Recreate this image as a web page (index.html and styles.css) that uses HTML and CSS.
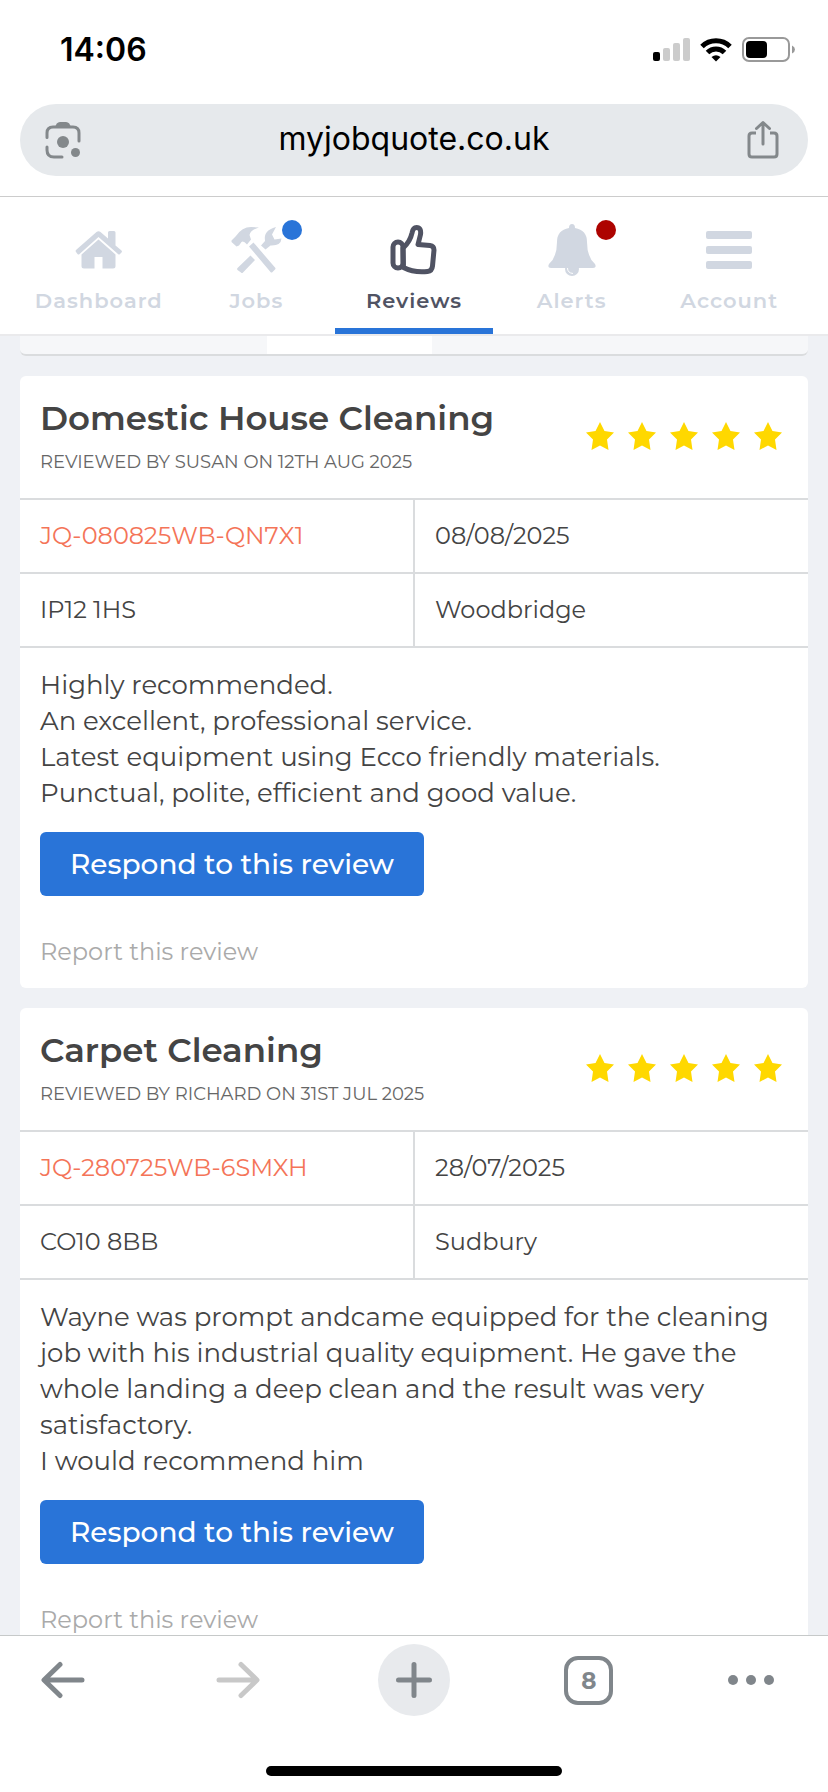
FILE: index.html
```html
<!DOCTYPE html>
<html lang="en">
<head>
    <meta charset="UTF-8">
    <meta name="viewport" content="width=device-width, initial-scale=1.0">
    <title>Reviews</title>
    <link rel="stylesheet" href="styles.css">
</head>
<body>
    <div class="status-bar">
        <span class="clock">14:06</span>
        <div class="status-icons">
            <svg width="37" height="24" viewBox="0 0 37 24">
                <rect x="0" y="14" width="7" height="9" rx="2" fill="#000"/>
                <rect x="10" y="10" width="7" height="13" rx="2" fill="#ccc"/>
                <rect x="20" y="5" width="7" height="18" rx="2" fill="#ccc"/>
                <rect x="30" y="0" width="7" height="23" rx="2" fill="#ccc"/>
            </svg>
            <svg width="32" height="24" viewBox="0 0 32 24" fill="none" stroke="#000" stroke-width="5">
                <path d="M2 8.500a20 20 0 0 1 28 0"/>
                <path d="M7.500 14.500a12 12 0 0 1 17 0"/>
                <path d="M16 23.500l-4.500-4.500q4.500-3.500 9 0z" fill="#000" stroke="none"/>
            </svg>
            <svg width="54" height="26" viewBox="0 0 54 26">
                <rect x="1" y="1" width="46" height="23" rx="6" fill="none" stroke="#999" stroke-width="2"/>
                <rect x="4" y="4" width="21" height="17" rx="4" fill="#000"/>
                <path d="M50 8.500v8q3-1.500 3-4t-3-4z" fill="#999"/>
            </svg>
        </div>
    </div>

    <div class="address-bar">
        <button class="icon-button" aria-label="Search with camera">
            <svg width="38" height="38" viewBox="0 0 38 38" fill="none" stroke="#83888b" stroke-width="3" stroke-linecap="round">
                <path d="M3 16.500V12q0-6 6-6h20q6 0 6 6v8"/>
                <path d="M3 26v3q0 7 7 7h8"/>
                <path d="M11 7q1-6 5-6h6q4 0 5 6z" fill="#83888b" stroke="none"/>
                <circle cx="19" cy="21" r="6" fill="#83888b" stroke="none"/>
                <circle cx="31.500" cy="31.500" r="4.500" fill="#83888b" stroke="none"/>
            </svg>
        </button>
        <input class="address-input" type="text" value="myjobquote.co.uk" aria-label="Address">
        <button class="icon-button" aria-label="Share">
            <svg width="34" height="40" viewBox="0 0 34 40" fill="none" stroke="#83888b" stroke-width="3" stroke-linecap="round" stroke-linejoin="round">
                <path d="M10 13H6q-3 0-3 3v18q0 3 3 3h22q3 0 3-3V16q0-3-3-3h-4" stroke-linecap="butt"/>
                <path d="M17 24V3M10.500 8.500L17 2.500l6.500 6"/>
            </svg>
        </button>
    </div>

    <nav class="main-nav">
        <a class="nav-item" href="#">
            <span class="nav-icon">
                <svg width="48" height="52" viewBox="0 0 48 52">
                    <path d="M1 26L21.500 8q2-1.500 4 0L33 14.500V8.500q0-1.500 1.500-1.500h4.500q1.500 0 1.500 1.500v13l6 5q1 1 0 2l-1.500 1.500q-1 1-2 0L23.500 13L4.500 30q-1 1-2 0L1 28q-1-1 0-2z"/>
                    <path d="M6.500 30.500L23.500 15.500L40.500 30.500v11.500q0 2.500-2.500 2.500H27.500V33h-8v11.500H9Q6.500 44.500 6.500 42z"/>
                </svg>
            </span>
            <span class="nav-label">Dashboard</span>
        </a>
        <a class="nav-item" href="#">
            <span class="nav-icon">
                <svg width="52" height="52" viewBox="0 0 52 52">
                    <path d="M1.500 16.500L6 12Q12 3 21 3L29 3.500Q20.500 6 19.500 11L21 15.500L17 20.500Q13.500 16.500 11.500 18L9 21.500L6.500 22.500L1.500 18z"/>
                    <path d="M19 22.500L23.500 18.500L45 43.500q1 1 0 2l-2.500 2.500q-1 1-2 0z"/>
                    <path d="M20.500 31.500L25 36L13 48.500q-1 1-2 0L7.500 46q-1-1 0-2z"/>
                    <path d="M31 21.500L35 17Q33 6.500 46 3L42 10.500L44.500 15.500L51.500 14.500Q51 22 40.500 21.500L35.500 25.500z"/>
                </svg>
                <span class="badge badge-blue"></span>
            </span>
            <span class="nav-label">Jobs</span>
        </a>
        <a class="nav-item active" href="#" aria-current="page">
            <span class="nav-icon">
                <svg class="outline" width="48" height="52" viewBox="0 0 48 52">
                    <rect x="3" y="18" width="10" height="26" rx="5"/>
                    <path d="M13 24Q20 18 22 9q1-5.500 4.500-5.500 5 0 4 7L28 20.500l12 1q4 .5 4 4.500l-1.500 16q-.5 5-5 5.500Q24 49 13.500 43.500z"/>
                </svg>
            </span>
            <span class="nav-label">Reviews</span>
        </a>
        <a class="nav-item" href="#">
            <span class="nav-icon">
                <svg width="48" height="52" viewBox="0 0 48 52">
                    <path d="M24 0q3 0 3 4 12 2 12 14 0 15 8 22 2 4-2 4H3q-4 0-2-4 8-7 8-22Q9 6 21 4q0-4 3-4z"/>
                    <circle cx="24" cy="45" r="7"/>
                    <path d="M19.500 44q0 5 5.500 5.500" fill="none" stroke="#fff"/>
                </svg>
                <span class="badge badge-red"></span>
            </span>
            <span class="nav-label">Alerts</span>
        </a>
        <a class="nav-item" href="#">
            <span class="nav-icon">
                <svg width="46" height="52" viewBox="0 0 46 52">
                    <rect x="0" y="7" width="46" height="8" rx="2"/>
                    <rect x="0" y="22" width="46" height="8" rx="2"/>
                    <rect x="0" y="37" width="46" height="8" rx="2"/>
                </svg>
            </span>
            <span class="nav-label">Account</span>
        </a>
    </nav>

    <main class="content">
        <div class="pager">
            <span></span>
            <span class="pager-current"></span>
            <span></span>
        </div>

        <article class="review">
            <header class="review-header">
                <div>
                    <h2>Domestic House Cleaning</h2>
                    <p class="reviewed-by">REVIEWED BY SUSAN ON 12TH AUG 2025</p>
                </div>
                <div class="stars" role="img" aria-label="5 out of 5 stars">
                    <svg viewBox="0 0 28 28"><path d="M14 0l4.500 9 9.500 1.500-7 7 1.500 10.500-8.500-4.500-8.500 4.500 1.500-10.500-7-7 9.500-1.500z"/></svg>
                    <svg viewBox="0 0 28 28"><path d="M14 0l4.500 9 9.500 1.500-7 7 1.500 10.500-8.500-4.500-8.500 4.500 1.500-10.500-7-7 9.500-1.500z"/></svg>
                    <svg viewBox="0 0 28 28"><path d="M14 0l4.500 9 9.500 1.500-7 7 1.500 10.500-8.500-4.500-8.500 4.500 1.500-10.500-7-7 9.500-1.500z"/></svg>
                    <svg viewBox="0 0 28 28"><path d="M14 0l4.500 9 9.500 1.500-7 7 1.500 10.500-8.500-4.500-8.500 4.500 1.500-10.500-7-7 9.500-1.500z"/></svg>
                    <svg viewBox="0 0 28 28"><path d="M14 0l4.500 9 9.500 1.500-7 7 1.500 10.500-8.500-4.500-8.500 4.500 1.500-10.500-7-7 9.500-1.500z"/></svg>
                </div>
            </header>
            <table class="details">
                <tr>
                    <td><a href="#">JQ-080825WB-QN7X1</a></td>
                    <td>08/08/2025</td>
                </tr>
                <tr>
                    <td>IP12 1HS</td>
                    <td>Woodbridge</td>
                </tr>
            </table>
            <div class="review-body">
                <p>Highly recommended.<br>
                An excellent, professional service.<br>
                Latest equipment using Ecco friendly materials.<br>
                Punctual, polite, efficient and good value.</p>
                <button class="respond">Respond to this review</button>
                <a class="report" href="#">Report this review</a>
            </div>
        </article>

        <article class="review">
            <header class="review-header">
                <div>
                    <h2>Carpet Cleaning</h2>
                    <p class="reviewed-by">REVIEWED BY RICHARD ON 31ST JUL 2025</p>
                </div>
                <div class="stars" role="img" aria-label="5 out of 5 stars">
                    <svg viewBox="0 0 28 28"><path d="M14 0l4.500 9 9.500 1.500-7 7 1.500 10.500-8.500-4.500-8.500 4.500 1.500-10.500-7-7 9.500-1.500z"/></svg>
                    <svg viewBox="0 0 28 28"><path d="M14 0l4.500 9 9.500 1.500-7 7 1.500 10.500-8.500-4.500-8.500 4.500 1.500-10.500-7-7 9.500-1.500z"/></svg>
                    <svg viewBox="0 0 28 28"><path d="M14 0l4.500 9 9.500 1.500-7 7 1.500 10.500-8.500-4.500-8.500 4.500 1.500-10.500-7-7 9.500-1.500z"/></svg>
                    <svg viewBox="0 0 28 28"><path d="M14 0l4.500 9 9.500 1.500-7 7 1.500 10.500-8.500-4.500-8.500 4.500 1.500-10.500-7-7 9.500-1.500z"/></svg>
                    <svg viewBox="0 0 28 28"><path d="M14 0l4.500 9 9.500 1.500-7 7 1.500 10.500-8.500-4.500-8.500 4.500 1.500-10.500-7-7 9.500-1.500z"/></svg>
                </div>
            </header>
            <table class="details">
                <tr>
                    <td><a href="#">JQ-280725WB-6SMXH</a></td>
                    <td>28/07/2025</td>
                </tr>
                <tr>
                    <td>CO10 8BB</td>
                    <td>Sudbury</td>
                </tr>
            </table>
            <div class="review-body">
                <p>Wayne was prompt andcame equipped for the cleaning job with his industrial quality equipment. He gave the whole landing a deep clean and the result was very satisfactory.<br>
                I would recommend him</p>
                <button class="respond">Respond to this review</button>
                <a class="report" href="#">Report this review</a>
            </div>
        </article>
    </main>

    <footer class="browser-bar">
        <div class="browser-buttons">
            <button class="icon-button tool" aria-label="Back">
                <svg width="46" height="38" viewBox="0 0 46 38"><path d="M42 19H4.500M20 3.500L4 19l16 15.500"/></svg>
            </button>
            <button class="icon-button tool" aria-label="Forward" disabled>
                <svg width="46" height="38" viewBox="0 0 46 38"><path d="M4 19h37.500M26 3.500L42 19l-16 15.500"/></svg>
            </button>
            <button class="icon-button tool new-tab" aria-label="New tab">
                <svg width="38" height="38" viewBox="0 0 38 38"><path d="M19 3.500v31M3.500 19h31"/></svg>
            </button>
            <button class="icon-button tool" aria-label="8 open tabs"><span class="tab-count">8</span></button>
            <button class="icon-button" aria-label="More">
                <svg class="dots" width="46" height="12" viewBox="0 0 46 12">
                    <circle cx="5" cy="6" r="5"/>
                    <circle cx="23" cy="6" r="5"/>
                    <circle cx="41" cy="6" r="5"/>
                </svg>
            </button>
        </div>
        <div class="home-indicator"></div>
    </footer>
</body>
</html>
```
FILE: styles.css
```css
* {
    box-sizing: border-box;
}

body {
    margin: 0;
    height: 100vh;
    display: flex;
    flex-direction: column;
    overflow: hidden;
    font-family: 'Montserrat', 'Inter', sans-serif;
    font-size: 26px;
    color: #444;
    background-color: #fff;
}

a {
    text-decoration: none;
}

button {
    font-family: inherit;
    border: none;
    padding: 0;
    cursor: pointer;
}

svg {
    display: block;
}

.status-bar {
    display: flex;
    justify-content: space-between;
    align-items: center;
    flex-shrink: 0;
    padding: 30px 32px 34px 60px;
    line-height: 40px;
    color: #000;
}

.clock {
    font-family: 'Inter', sans-serif;
    font-size: 32px;
    font-weight: 600;
}

.status-icons {
    display: flex;
    align-items: center;
    gap: 10px;
}

.address-bar {
    display: flex;
    align-items: center;
    flex-shrink: 0;
    height: 72px;
    margin: 0 20px 20px;
    padding: 0 28px 0 24px;
    border-radius: 36px;
    background-color: #e6e9ec;
}

.address-input {
    flex: 1;
    min-width: 0;
    padding: 0 0 4px;
    border: none;
    outline: none;
    background: none;
    font-family: 'Inter', sans-serif;
    font-size: 32px;
    text-align: center;
    color: #000;
}

.icon-button {
    background: none;
}

/* Main navigation */
.main-nav {
    display: grid;
    grid-template-columns: repeat(5, 1fr);
    flex-shrink: 0;
    padding: 0 20px;
    border-top: 1px solid #ccc;
    border-bottom: 2px solid #eaeaec;
    background-color: #fff;
}

.nav-item {
    display: flex;
    flex-direction: column;
    align-items: center;
    padding-top: 27px;
    border-bottom: 6px solid transparent;
    color: #d1d7e1;
}

.nav-item.active {
    border-color: #2974d8;
    color: #505363;
}

.nav-icon {
    position: relative;
    fill: currentColor;
}

.nav-icon .outline {
    fill: none;
    stroke: currentColor;
    stroke-width: 5;
    stroke-linejoin: round;
}

.nav-label {
    padding: 11px 0 13px;
    font-size: 21px;
    font-weight: 600;
    line-height: 28px;
    letter-spacing: 1px;
}

.badge {
    position: absolute;
    top: -4px;
    right: -20px;
    width: 20px;
    height: 20px;
    border-radius: 50%;
}

.badge-blue {
    background-color: #2974d8;
}

.badge-red {
    background-color: #ad0300;
}

/* Reviews */
.content {
    flex: 1;
    min-height: 0;
    overflow: hidden;
    padding: 0 20px;
    background-color: #eff1f5;
}

.pager {
    display: grid;
    grid-template-columns: 247px 165px 1fr;
    height: 20px;
    margin-bottom: 20px;
    border-bottom: 2px solid #dadcde;
    border-radius: 0 0 6px 6px;
    background-color: #f6f7f9;
}

.pager-current {
    background-color: #fff;
}

.review {
    margin-bottom: 20px;
    border-radius: 6px;
    background-color: #fff;
}

.review-header {
    display: flex;
    justify-content: space-between;
    align-items: center;
    padding: 20px 26px 22px 20px;
}

.review h2 {
    margin: 0;
    font-size: 34px;
    font-weight: 600;
    line-height: 44px;
}

.reviewed-by {
    margin: 11px 0 3px;
    font-size: 18px;
    line-height: 22px;
    color: #666;
}

.stars {
    display: flex;
    gap: 14px;
}

.stars svg {
    width: 28px;
    height: 28px;
    fill: #ffd800;
}

.details {
    width: 100%;
    table-layout: fixed;
    border-collapse: collapse;
}

.details td {
    height: 74px;
    padding: 0 20px 2px;
    border: solid #dadcde;
    border-width: 2px 0;
    font-size: 24px;
}

.details td + td {
    border-left-width: 2px;
}

.details a {
    color: #f47458;
}

.review-body {
    padding: 19px 20px 18px;
    line-height: 36px;
}

.review-body p {
    margin: 0 0 21px;
}

.respond {
    display: block;
    height: 64px;
    padding: 0 30px;
    border-radius: 6px;
    font-size: 28px;
    font-weight: 500;
    color: #fff;
    background-color: #2974d8;
}

.report {
    display: block;
    margin-top: 38px;
    font-size: 24px;
    color: #aaa;
}

/* Browser toolbar */
.browser-bar {
    flex-shrink: 0;
    padding-bottom: 16px;
    border-top: 1px solid #c6c9c9;
    background-color: #fff;
}

.browser-buttons {
    display: flex;
    justify-content: space-between;
    align-items: center;
    padding: 8px 54px 50px 27px;
    fill: none;
    stroke: #80868b;
    stroke-width: 5;
    stroke-linecap: round;
    stroke-linejoin: round;
}

.tool {
    display: flex;
    align-items: center;
    justify-content: center;
    width: 72px;
    height: 72px;
}

.tool:disabled {
    stroke: #c8c8c8;
}

.new-tab {
    border-radius: 50%;
    background-color: #e8eaed;
}

.tab-count {
    width: 49px;
    height: 49px;
    border: 4px solid #80868b;
    border-radius: 14px;
    font-size: 23px;
    font-weight: 700;
    line-height: 42px;
    color: #80868b;
}

.dots {
    fill: #80868b;
    stroke: none;
}

.home-indicator {
    width: 296px;
    height: 10px;
    margin: 0 auto;
    border-radius: 5px;
    background-color: #000;
}
```
